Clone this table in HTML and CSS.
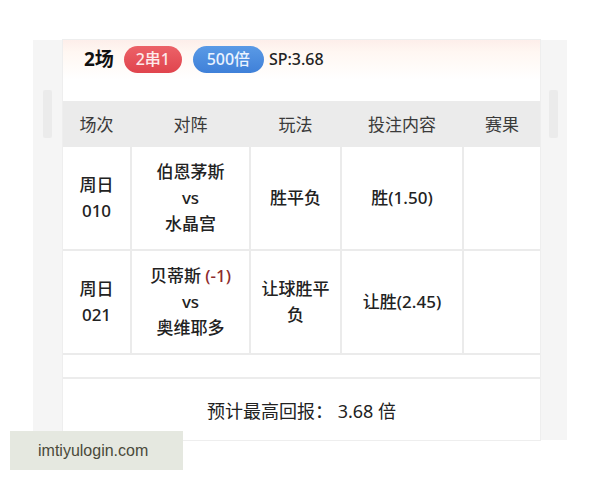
FILE: index.html
```html
<!DOCTYPE html>
<html lang="zh">
<head>
<meta charset="utf-8">
<link rel="stylesheet" href="styles.css">
</head>
<body>
<div class="panel">
  <div class="side"><div class="bar"></div></div>
  <div class="card">
    <div class="title">
      <span class="count">2场</span>
      <span class="badge red">2串1</span>
      <span class="badge blue">500倍</span>
      <span class="sp">SP:3.68</span>
    </div>
    <div class="table">
      <div class="th">场次</div>
      <div class="th">对阵</div>
      <div class="th">玩法</div>
      <div class="th">投注内容</div>
      <div class="th">赛果</div>

      <div class="td"><div>周日<br>010</div></div>
      <div class="td"><div>伯恩茅斯<br>vs<br>水晶宫</div></div>
      <div class="td"><div>胜平负</div></div>
      <div class="td"><div>胜(1.50)</div></div>
      <div class="td"></div>

      <div class="td"><div>周日<br>021</div></div>
      <div class="td"><div>贝蒂斯 <span class="hcp">(-1)</span><br>vs<br>奥维耶多</div></div>
      <div class="td"><div>让球胜平<br>负</div></div>
      <div class="td"><div>让胜(2.45)</div></div>
      <div class="td"></div>

      <div class="empty"></div>
    </div>
    <div class="footer">预计最高回报： 3.68 倍</div>
  </div>
  <div class="side right"><div class="bar"></div></div>
</div>
<div class="watermark">imtiyulogin.com</div>
</body>
</html>
```

FILE: styles.css
```css
html, body {
  margin: 0;
  padding: 0;
  background: #ffffff;
  width: 600px;
  height: 480px;
  overflow: hidden;
  font-family: "Noto Sans", "Noto Sans CJK SC", sans-serif;
  color: #222;
}

.panel {
  margin: 40px 0 0 33px;
  width: 534px;
  height: 400px;
  background: #f5f5f5;
  display: grid;
  grid-template-columns: 30px 477px 1fr;
}

.side {
  display: flex;
  justify-content: flex-start;
}

.side .bar {
  margin: 50px 0 0 10px;
  width: 9px;
  height: 48px;
  background: #ebebeb;
  border-radius: 2px;
}

.side.right .bar {
  margin-left: 9px;
}

.card {
  background: #ffffff;
  display: flex;
  flex-direction: column;
  box-shadow: 0 0 0 1px #eeeeee;
}

.title {
  height: 61px;
  box-sizing: border-box;
  padding: 6px 0 0 21px;
  display: flex;
  align-items: flex-start;
  background: linear-gradient(180deg, #fdeeea 0px, #fff7f2 12px, #ffffff 40px);
}

.count {
  font-weight: bold;
  font-size: 19px;
  line-height: 27px;
  color: #111;
  margin-right: 10px;
}

.badge {
  height: 27px;
  line-height: 27px;
  border-radius: 14px;
  font-size: 16px;
  font-weight: 500;
  color: #fde9ea;
  text-align: center;
}

.badge.red {
  width: 58px;
  background: linear-gradient(180deg, #ec6268, #e0444d);
  margin-right: 11px;
}

.badge.blue {
  width: 71px;
  background: linear-gradient(180deg, #5a9ae6, #3f80d8);
  color: #eaf3ff;
  margin-right: 5px;
}

.sp {
  font-size: 16px;
  font-weight: 500;
  line-height: 27px;
  color: #222;
}

.table {
  display: grid;
  grid-template-columns: 67px 117px 89px 120px 1fr;
  grid-template-rows: 44px 102px 102px 22px;
  gap: 2px;
  background: #ebebeb;
  border-bottom: 2px solid #ececec;
}

.th {
  background: #ebebeb;
  color: #3a3a3a;
  font-size: 17px;
  font-weight: 400;
  display: flex;
  align-items: center;
  justify-content: center;
}

.td {
  background: #ffffff;
  font-size: 17px;
  font-weight: 500;
  line-height: 26px;
  display: flex;
  align-items: center;
  justify-content: center;
  text-align: center;
  color: #222;
}

.hcp {
  color: #8e2b2b;
}

.empty {
  grid-column: 1 / -1;
  background: #ffffff;
}

.footer {
  flex: 1;
  display: flex;
  align-items: center;
  justify-content: center;
  font-size: 18px;
  font-weight: 400;
  color: #222;
}

.watermark {
  position: absolute;
  left: 10px;
  top: 431px;
  width: 173px;
  height: 39px;
  box-sizing: border-box;
  padding-left: 28px;
  background: #e5e8e0;
  color: #4a4a3a;
  font-family: "Liberation Sans", sans-serif;
  font-size: 16px;
  line-height: 39px;
}
```
